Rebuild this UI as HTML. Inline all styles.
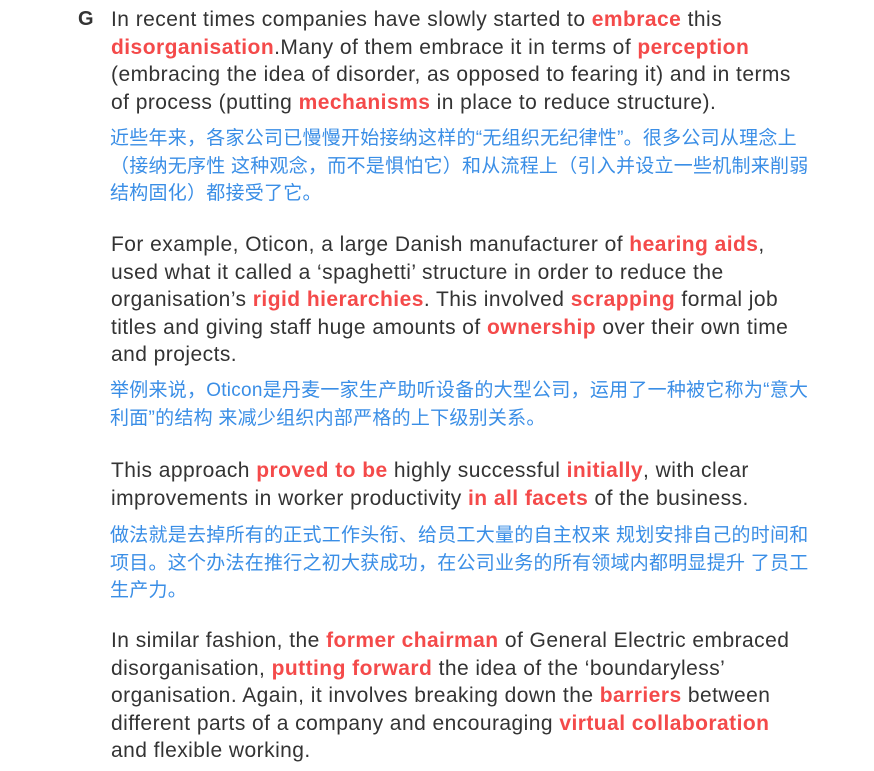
<!DOCTYPE html>
<html><head><meta charset="utf-8"><style>
body{margin:0;width:874px;height:771px;background:#fff;position:relative;overflow:hidden;font-family:"Liberation Sans",Arial,sans-serif;}
.e{position:absolute;left:111px;font-size:21px;letter-spacing:0.45px;line-height:27.5px;color:#333;white-space:nowrap;}
.c{position:absolute;left:110px;font-size:19px;letter-spacing:0.25px;line-height:27.5px;color:#3a8ee6;white-space:nowrap;font-family:"Liberation Sans","Noto Sans CJK SC",sans-serif;}
b{color:#f44a4a;font-weight:bold;}
.g{position:absolute;left:78px;top:6px;font-size:20px;line-height:27.5px;font-weight:bold;color:#333;}
</style></head><body>
<div class="g">G</div>
<div class="e" style="top:6px">In recent times companies have slowly started to <b>embrace</b> this<br><b>disorganisation</b>.Many of them embrace it in terms of <b>perception</b><br>(embracing the idea of disorder, as opposed to fearing it) and in terms<br>of process (putting <b>mechanisms</b> in place to reduce structure).</div>
<div class="c" style="top:125px">近些年来，各家公司已慢慢开始接纳这样的“无组织无纪律性”。很多公司从理念上<br>（接纳无序性 这种观念，而不是惧怕它）和从流程上（引入并设立一些机制来削弱<br>结构固化）都接受了它。</div>
<div class="e" style="top:231px">For example, Oticon, a large Danish manufacturer of <b>hearing aids</b>,<br>used what it called a ‘spaghetti’ structure in order to reduce the<br>organisation’s <b>rigid hierarchies</b>. This involved <b>scrapping</b> formal job<br>titles and giving staff huge amounts of <b>ownership</b> over their own time<br>and projects.</div>
<div class="c" style="top:377px">举例来说，Oticon是丹麦一家生产助听设备的大型公司，运用了一种被它称为“意大<br>利面”的结构 来减少组织内部严格的上下级别关系。</div>
<div class="e" style="top:457px">This approach <b>proved to be</b> highly successful <b>initially</b>, with clear<br>improvements in worker productivity <b>in all facets</b> of the business.</div>
<div class="c" style="top:522px">做法就是去掉所有的正式工作头衔、给员工大量的自主权来 规划安排自己的时间和<br>项目。这个办法在推行之初大获成功，在公司业务的所有领域内都明显提升 了员工<br>生产力。</div>
<div class="e" style="top:627px">In similar fashion, the <b>former chairman</b> of General Electric embraced<br>disorganisation, <b>putting forward</b> the idea of the ‘boundaryless’<br>organisation. Again, it involves breaking down the <b>barriers</b> between<br>different parts of a company and encouraging <b>virtual collaboration</b><br>and flexible working.</div>
</body></html>
